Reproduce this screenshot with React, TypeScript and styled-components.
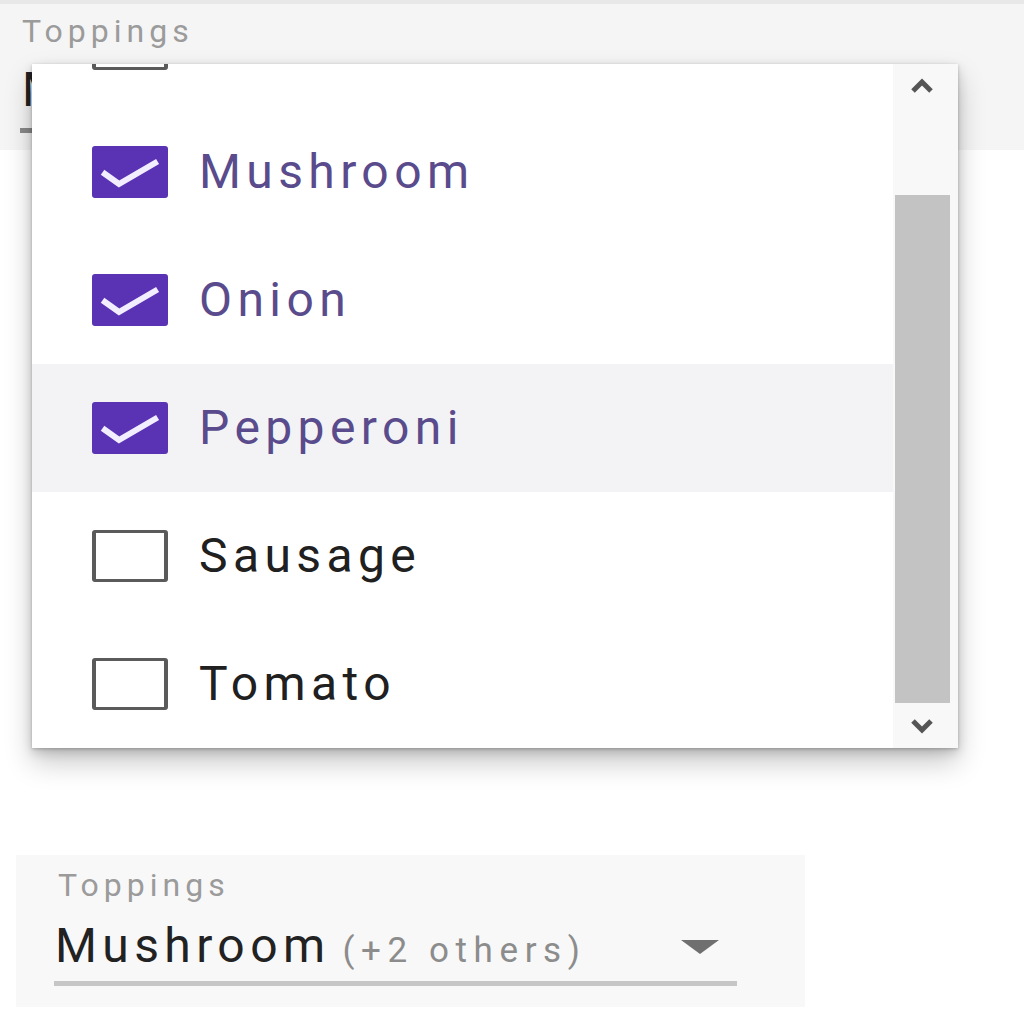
import React from "react";
import styled, { createGlobalStyle } from "styled-components";

const GlobalStyle = createGlobalStyle`
  html, body { margin: 0; padding: 0; background: #ffffff; }
  body { font-family: Roboto, "Liberation Sans", Arial, sans-serif; }
`;

const Page = styled.div`
  position: relative;
  width: 1024px;
  height: 1024px;
  overflow: hidden;
  background: #ffffff;
  font-family: Roboto, "Liberation Sans", Arial, sans-serif;
`;

const TopField = styled.div`
  box-sizing: border-box;
  height: 150px;
  background: #f5f5f5;
  border-top: 4px solid #e8e8e8;
  padding: 9px 0 0 22px;
`;

const FieldLabel = styled.div`
  font-size: 32px;
  line-height: 36px;
  letter-spacing: 5px;
  color: #9b9b9b;
`;

const ValueRow = styled.div<{ $width: number }>`
  display: flex;
  align-items: baseline;
  width: ${(p) => p.$width}px;
  box-sizing: border-box;
  padding-right: 18px;
`;

const ValueText = styled.span`
  font-size: 48px;
  line-height: 48px;
  letter-spacing: 5.4px;
  color: #222222;
`;

const ExtraText = styled.span`
  font-size: 35px;
  letter-spacing: 6.6px;
  color: #8c8c8c;
  margin-left: 12px;
  flex: 1;
`;

const Arrow = styled.span`
  width: 0;
  height: 0;
  border-left: 19px solid transparent;
  border-right: 19px solid transparent;
  border-top: 14px solid #6f6f6f;
  align-self: center;
`;

const Underline = styled.div<{ $width: number; $color: string }>`
  width: ${(p) => p.$width}px;
  height: 5px;
  background: ${(p) => p.$color};
`;

const TopValueWrap = styled.div`
  margin-top: 17px;
`;

const TopUnderlineWrap = styled.div`
  margin-top: 14px;
  margin-left: -2px;
`;

const Panel = styled.div`
  position: absolute;
  top: 64px;
  left: 32px;
  width: 926px;
  height: 684px;
  display: flex;
  background: #ffffff;
  overflow: hidden;
  box-shadow: 0 14px 26px rgba(0, 0, 0, 0.22), 0 4px 10px rgba(0, 0, 0, 0.16),
    0 1px 3px rgba(0, 0, 0, 0.2);
`;

const OptionList = styled.div`
  flex: 1;
  overflow: hidden;
`;

const OptionTrack = styled.div`
  margin-top: -84px;
`;

const Option = styled.div<{ $active?: boolean }>`
  height: 128px;
  display: flex;
  align-items: center;
  gap: 31px;
  padding-left: 60px;
  background: ${(p) => (p.$active ? "#f3f3f5" : "transparent")};
`;

const Box = styled.div<{ $checked: boolean }>`
  box-sizing: border-box;
  width: 76px;
  height: 52px;
  border-radius: 3px;
  display: flex;
  align-items: center;
  justify-content: center;
  background: ${(p) => (p.$checked ? "#5933b3" : "#ffffff")};
  border: ${(p) => (p.$checked ? "none" : "3px solid #5a5a5a")};
  border-left-width: ${(p) => (p.$checked ? "0" : "4px")};
  border-right-width: ${(p) => (p.$checked ? "0" : "4px")};
`;

const OptionText = styled.span<{ $selected: boolean }>`
  font-size: 48px;
  line-height: 48px;
  letter-spacing: 5.4px;
  color: ${(p) => (p.$selected ? "#594b8c" : "#202020")};
`;

const Scrollbar = styled.div`
  width: 65px;
  display: flex;
  flex-direction: column;
  background: #f8f8f8;
`;

const ScrollButton = styled.div<{ $h: number }>`
  height: ${(p) => p.$h}px;
  display: flex;
  align-items: center;
  justify-content: center;
  padding-right: 8px;
`;

const ScrollTrack = styled.div`
  flex: 1;
  display: flex;
  flex-direction: column;
  padding: 87px 8px 0 2px;
`;

const Thumb = styled.div`
  flex: 1;
  background: #c3c3c3;
`;

const BottomField = styled.div`
  box-sizing: border-box;
  margin: 705px 0 0 16px;
  width: 789px;
  height: 152px;
  background: #f8f8f8;
  padding: 12px 0 0 42px;
`;

const BottomValueWrap = styled.div`
  margin-top: 19px;
  margin-left: -3px;
`;

const BottomUnderlineWrap = styled.div`
  margin-top: 10px;
  margin-left: -4px;
`;

const Check = () => (
  <svg width="76" height="52" viewBox="0 0 76 52">
    <polyline
      points="13,28 27,38 63,17"
      fill="none"
      stroke="#f3eeff"
      strokeWidth="6"
      strokeLinecap="square"
    />
  </svg>
);

const Chevron = ({ up }: { up: boolean }) => (
  <svg width="30" height="16" viewBox="0 0 30 16">
    <polyline
      points={up ? "6,13 15,4 24,13" : "6,3 15,12 24,3"}
      fill="none"
      stroke="#555555"
      strokeWidth="5"
    />
  </svg>
);

const options = [
  { label: "Mushroom", checked: true },
  { label: "Onion", checked: true },
  { label: "Pepperoni", checked: true, active: true },
  { label: "Sausage", checked: false },
  { label: "Tomato", checked: false },
];

export default function App() {
  return (
    <Page>
      <GlobalStyle />
      <TopField>
        <FieldLabel>Toppings</FieldLabel>
        <TopValueWrap>
          <ValueRow $width={700}>
            <ValueText>M</ValueText>
          </ValueRow>
        </TopValueWrap>
        <TopUnderlineWrap>
          <Underline $width={700} $color="#8a8a8a" />
        </TopUnderlineWrap>
      </TopField>

      <Panel>
        <OptionList>
          <OptionTrack>
            <Option aria-hidden>
              <Box $checked={false} />
            </Option>
            {options.map((o) => (
              <Option key={o.label} $active={o.active}>
                <Box $checked={o.checked}>{o.checked && <Check />}</Box>
                <OptionText $selected={o.checked}>{o.label}</OptionText>
              </Option>
            ))}
          </OptionTrack>
        </OptionList>
        <Scrollbar>
          <ScrollButton $h={44}>
            <Chevron up />
          </ScrollButton>
          <ScrollTrack>
            <Thumb />
          </ScrollTrack>
          <ScrollButton $h={45}>
            <Chevron up={false} />
          </ScrollButton>
        </Scrollbar>
      </Panel>

      <BottomField>
        <FieldLabel>Toppings</FieldLabel>
        <BottomValueWrap>
          <ValueRow $width={682}>
            <ValueText>Mushroom</ValueText>
            <ExtraText>(+2 others)</ExtraText>
            <Arrow />
          </ValueRow>
        </BottomValueWrap>
        <BottomUnderlineWrap>
          <Underline $width={683} $color="#c6c6c6" />
        </BottomUnderlineWrap>
      </BottomField>
    </Page>
  );
}
